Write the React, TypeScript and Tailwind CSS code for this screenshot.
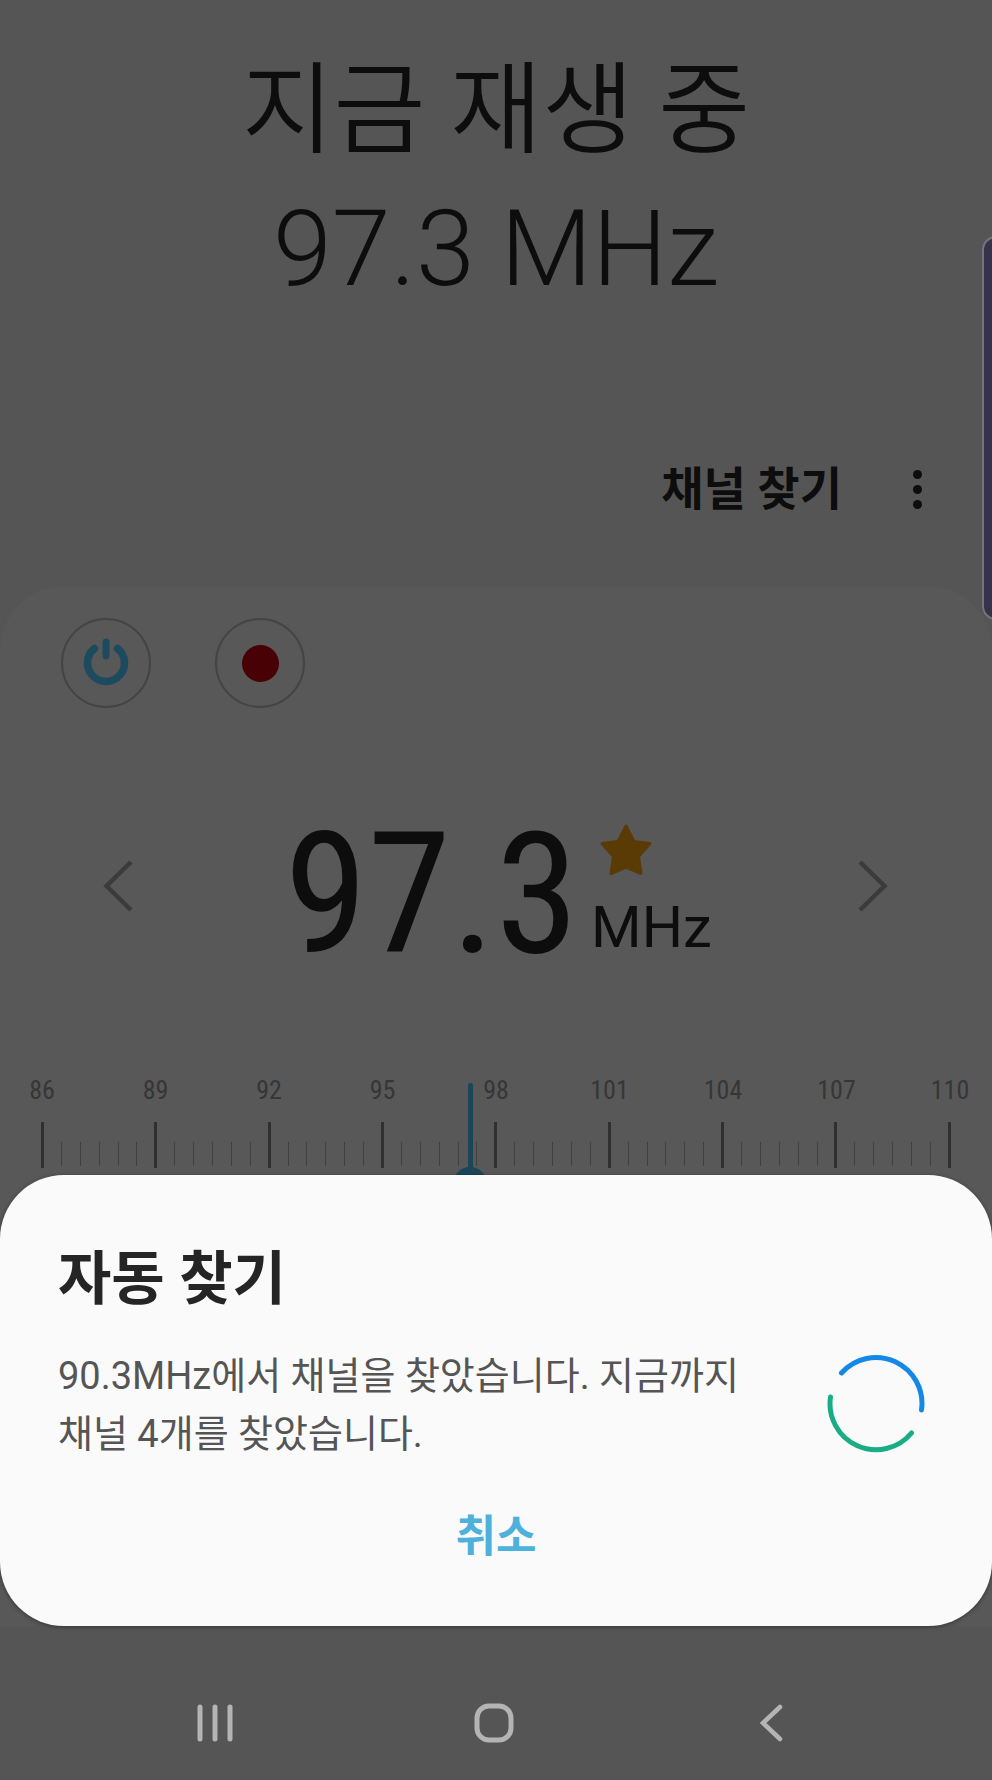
const MARKS = [86, 89, 92, 95, 98, 101, 104, 107, 110];
const TICKS = Array.from({ length: 49 }, (_, i) => i);

function PowerIcon() {
  return (
    <svg width="48" height="52" viewBox="-24 -26 48 52" fill="none" strokeLinecap="round" aria-hidden="true">
      <path d="M-11.5 -14.5A18.5 18.5 0 1 0 11.5 -14.5" stroke="#1c4a5e" strokeWidth="7.5" />
      <path d="M0 -21V-7" stroke="#1c4a5e" strokeWidth="7" />
    </svg>
  );
}

function Chevron({ flip = false }: { flip?: boolean }) {
  return (
    <svg width="32" height="54" viewBox="0 0 32 54" fill="none" stroke="#3b3b3b" strokeWidth="4.5" aria-hidden="true">
      <path d={flip ? "M2 3L26.500 27L2 51" : "M29 3L4.500 27L29 51"} />
    </svg>
  );
}

function Tuner() {
  return (
    <div className="relative pt-[3px]">
      <div className="flex justify-between px-[18px] text-[26px] leading-8 text-[#363636] font-['Roboto_Condensed','Roboto',sans-serif]">
        {MARKS.map((m) => (
          <span key={m} className="flex w-12 justify-center">{m}</span>
        ))}
      </div>
      <div className="mt-4 flex justify-between px-[41px]">
        {TICKS.map((i) => (
          <span key={i} className="flex w-[3px] justify-center">
            {i % 6 === 0 ? (
              <span className="h-[46px] w-[3px] bg-[#303030]" />
            ) : (
              <span className="mt-5 h-6 w-px bg-[#404040]" />
            )}
          </span>
        ))}
      </div>
      <div className="absolute top-3 left-[47.4%] flex -translate-x-1/2 flex-col items-center">
        <span className="h-[90px] w-[5px] rounded-t bg-[#1c4658]" />
        <span className="-mt-[6px] size-[34px] rounded-full bg-[#1c4658]" />
      </div>
      <input type="range" min="86" max="110" step="0.1" defaultValue="97.3" aria-label="주파수" className="absolute inset-0 size-full opacity-0" />
    </div>
  );
}

function SearchDialog() {
  return (
    <section role="dialog" aria-labelledby="dialog-title" className="absolute inset-x-0 bottom-full rounded-[64px] bg-[#fafafa] px-[58px] pt-16 pb-[50px] shadow-[0_1px_4px_rgba(0,0,0,0.4)]">
      <h2 id="dialog-title" className="text-[58px] leading-[80px] font-bold text-[#252525]">자동 찾기</h2>
      <div className="mt-7 flex items-center justify-between">
        <p className="text-[38px] leading-[58px] text-[#555555]">
          90.3MHz에서 채널을 찾았습니다. 지금까지<br />채널 4개를 찾았습니다.
        </p>
        <svg width="100" height="100" viewBox="-50 -50 100 100" fill="none" strokeWidth="5" strokeLinecap="round" className="mr-2 mb-1 shrink-0" role="img" aria-label="검색 중">
          <path d="M-34.5 -30A46 46 0 0 1 45.5 7" stroke="#1488e6" />
          <path d="M-45.5 -6A46 46 0 0 0 35.5 30" stroke="#18ad84" />
        </svg>
      </div>
      <div className="mt-[35px] flex justify-center">
        <button type="button" className="px-8 text-[44px] leading-[78px] font-bold text-[#4db1dc]">취소</button>
      </div>
    </section>
  );
}

export default function App() {
  return (
    <div className="relative flex min-h-screen flex-col overflow-hidden bg-[#555555] font-['Roboto','Noto_Sans_CJK_KR',sans-serif] text-[#0d0d0d]">
      <header className="pt-[42px] text-center font-light">
        <h1 className="text-[100px] leading-[138px] font-[350]">지금 재생 중</h1>
        <p className="text-[106px] leading-[138px]">97.3 MHz</p>
      </header>
      <div className="mt-[136px] flex items-center justify-end gap-14 pr-[56px]">
        <button type="button" className="text-[46px] leading-[70px] font-bold">채널 찾기</button>
        <button type="button" aria-label="더보기" className="flex w-[38px] flex-col items-center gap-[6px]">
          <span className="size-[9px] rounded-full bg-[#0d0d0d]" />
          <span className="size-[9px] rounded-full bg-[#0d0d0d]" />
          <span className="size-[9px] rounded-full bg-[#0d0d0d]" />
        </button>
      </div>
      <main className="mt-[62px] flex-1 rounded-t-[64px] bg-[#585858] pt-8">
        <div className="flex gap-16 pl-[61px]">
          <button type="button" aria-label="전원" className="flex size-[90px] items-center justify-center rounded-full border-2 border-[#444444]">
            <PowerIcon />
          </button>
          <button type="button" aria-label="녹음" className="flex size-[90px] items-center justify-center rounded-full border-2 border-[#444444]">
            <span className="size-[37px] rounded-full bg-[#480205]" />
          </button>
        </div>
        <div className="mt-[70px] flex items-center justify-between px-[102px]">
          <button type="button" aria-label="이전 채널"><Chevron /></button>
          <div className="flex items-center gap-3 pt-4 pl-1">
            <span className="text-[169px] leading-[200px] font-['Roboto_Condensed','Roboto',sans-serif]">97.3</span>
            <div className="flex flex-col items-start pb-1">
              <svg width="54" height="54" viewBox="0 0 54 54" className="ml-2" aria-hidden="true">
                <path d="M27 3L35 18.500L51 20.500L39.500 33.500L42 50.500L27 44L12 50.500L14.500 33.500L3 20.500L19 18.500Z" fill="#5a3b06" stroke="#5a3b06" strokeWidth="3" strokeLinejoin="round" />
              </svg>
              <span className="mt-4 text-[58px] leading-[68px]">MHz</span>
            </div>
          </div>
          <button type="button" aria-label="다음 채널"><Chevron flip /></button>
        </div>
        <div className="mt-[77px]">
          <Tuner />
        </div>
      </main>
      <aside className="absolute top-[236px] -right-2 h-[384px] w-[18px] rounded-l-[14px] border-2 border-[#74747a] bg-[#35324a]" />
      <footer className="relative bg-[#555555]">
        <SearchDialog />
        <nav className="flex h-[154px] items-center justify-between pt-10 pr-[200px] pl-[195px]">
          <button type="button" aria-label="최근 앱">
            <svg width="40" height="40" viewBox="0 0 40 40" stroke="#b4b4b4" strokeWidth="5" strokeLinecap="round"><path d="M5 4V36M20 4V36M35 4V36" /></svg>
          </button>
          <button type="button" aria-label="홈">
            <svg width="40" height="40" viewBox="0 0 40 40" fill="none" stroke="#b4b4b4" strokeWidth="5"><rect x="3" y="3" width="34" height="34" rx="12" /></svg>
          </button>
          <button type="button" aria-label="뒤로">
            <svg width="40" height="40" viewBox="0 0 40 40" fill="none" stroke="#b4b4b4" strokeWidth="4.500" strokeLinecap="round"><path d="M28 4L11 20L28 36" /></svg>
          </button>
        </nav>
      </footer>
    </div>
  );
}
